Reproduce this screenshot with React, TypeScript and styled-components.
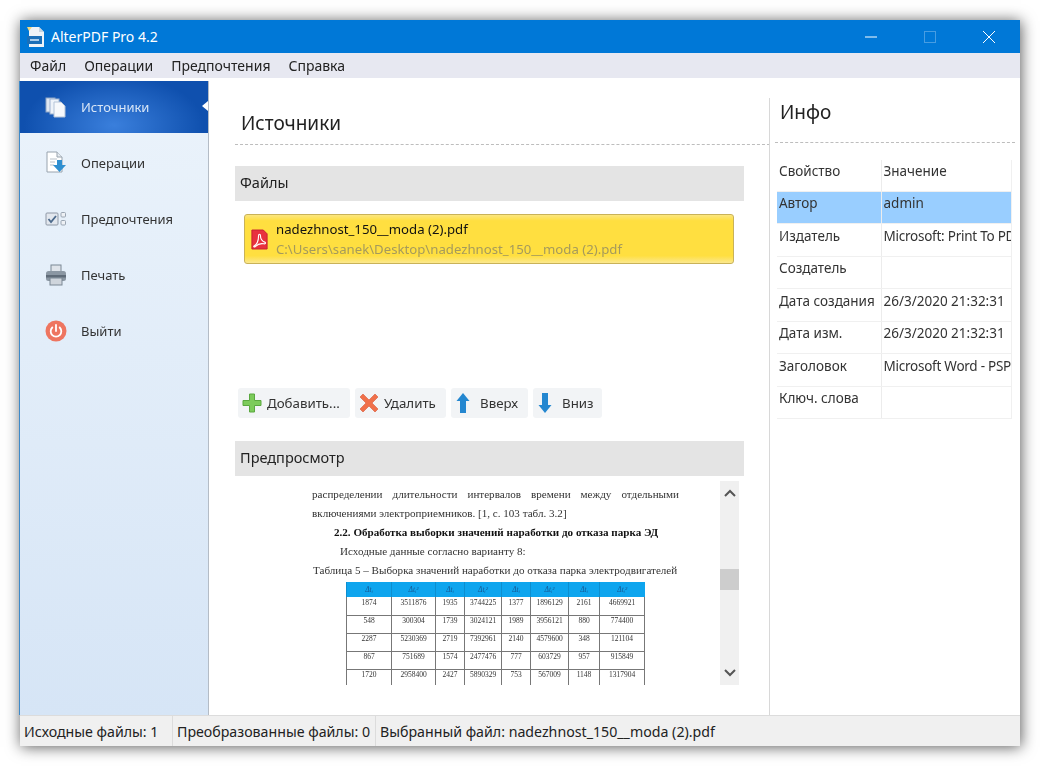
import React from 'react';
import styled, { createGlobalStyle } from 'styled-components';

const GlobalStyle = createGlobalStyle`
  html, body { margin: 0; padding: 0; background: #fff; }
  body { font-family: "Noto Sans", "Open Sans", sans-serif; color: #222; }
`;

const AppIcon = () => (
  <svg width="20" height="22" viewBox="0 0 20 22">
    <path d="M3 1h10l5 5v15H3z" fill="#eef3f8" />
    <path d="M13 1l5 5h-5z" fill="#c5d3e0" />
    <path d="M1 1l5 0-3 4z" fill="#f3d97a" />
    <rect x="1" y="10" width="15" height="8" fill="#1b6fb8" />
    <rect x="4" y="13" width="9" height="2" fill="#a9cdec" />
  </svg>
);

const SourcesIcon = () => (
  <svg width="22" height="22" viewBox="0 0 22 22">
    <rect x="1" y="2" width="9" height="14" fill="#dfe7f2" stroke="#8fa5c4" />
    <rect x="5" y="3" width="9" height="15" fill="#eef3fa" stroke="#9db2cf" />
    <path d="M9 6h7l4 4v11H9z" fill="#f7f9fc" stroke="#b5c4d8" />
  </svg>
);

const OperationsIcon = () => (
  <svg width="22" height="24" viewBox="0 0 22 24">
    <path d="M2 1h10l5 5v15H2z" fill="#fff" stroke="#98a3ae" />
    <path d="M12 1v5h5" fill="#e6ebf0" stroke="#98a3ae" />
    <path d="M5 8h7M5 11h5M5 14h4" stroke="#b8c0c8" />
    <path d="M12 9h5v5h4l-6.500 7-6.500-7h4z" fill="#2f8fd0" />
  </svg>
);

const PrefsIcon = () => (
  <svg width="22" height="16" viewBox="0 0 22 16">
    <rect x="1" y="2" width="12" height="12" rx="1" fill="#e2e7ee" stroke="#8e98a6" />
    <path d="M3.500 8l2.500 3 5-6" fill="none" stroke="#4c6a8c" strokeWidth="1.800" />
    <rect x="16" y="1.500" width="4.500" height="4.500" rx="1" fill="#eef1f5" stroke="#9aa5b2" />
    <rect x="16" y="9.500" width="4.500" height="4.500" rx="1" fill="#eef1f5" stroke="#9aa5b2" />
  </svg>
);

const PrinterIcon = () => (
  <svg width="22" height="22" viewBox="0 0 22 22">
    <rect x="6" y="1" width="10" height="7" fill="#dfe4ea" stroke="#7b8794" />
    <rect x="1" y="7" width="20" height="10" rx="2.500" fill="#8b97a3" />
    <rect x="1" y="11" width="20" height="2.500" fill="#5f6b78" />
    <rect x="5" y="14" width="12" height="7" fill="#cfd5dc" stroke="#7b8794" />
  </svg>
);

const PowerIcon = () => (
  <svg width="22" height="22" viewBox="0 0 22 22">
    <circle cx="11" cy="11" r="10.500" fill="#ee7560" />
    <path d="M7.300 7.500a5.300 5.300 0 1 0 7.400 0" fill="none" stroke="#fff" strokeWidth="1.800" strokeLinecap="round" />
    <path d="M11 5v6" stroke="#fff" strokeWidth="1.800" strokeLinecap="round" />
  </svg>
);

const PdfIcon = () => (
  <svg width="19" height="23" viewBox="0 0 20 24">
    <path d="M2 2h12l4 4v16H2z" fill="#e8313f" stroke="#c8202e" />
    <path d="M4 19c4-2 5-6 5-11 0-2 2-2 2 0 0 3 2 6 5 7 1 .7 0 2-1.500 1.500-3-.6-6 0-9 3-.7.800-2 .2-1.500-.500z" fill="none" stroke="#fff" strokeWidth="1.200" />
  </svg>
);

const PlusIcon = () => (
  <svg width="20" height="20" viewBox="0 0 20 20">
    <path d="M7.500 1h5v6.500H19v5h-6.500V19h-5v-6.500H1v-5h6.500z" fill="#7ccb5a" stroke="#5aa83f" />
  </svg>
);

const CrossIcon = () => (
  <svg width="20" height="20" viewBox="0 0 20 20">
    <path d="M4 1l6 6 6-6 3 3-6 6 6 6-3 3-6-6-6 6-3-3 6-6-6-6z" fill="#f0704a" stroke="#d9593a" strokeWidth=".6" />
  </svg>
);

const UpIcon = () => (
  <svg width="16" height="20" viewBox="0 0 16 20">
    <path d="M8 0l6.500 8H11v12H5V8H1.500z" fill="#2487d0" />
  </svg>
);

const DownIcon = () => (
  <svg width="16" height="20" viewBox="0 0 16 20">
    <path d="M5 0h6v12h3.500L8 20l-6.500-8H5z" fill="#2487d0" />
  </svg>
);

const Chevron = ({ up }: { up?: boolean }) => (
  <svg width="12" height="8" viewBox="0 0 12 8">
    <path d={up ? 'M1 7l5-5 5 5' : 'M1 1l5 5 5-5'} fill="none" stroke="#555" strokeWidth="2" />
  </svg>
);

const nav = [
  { name: 'Источники', icon: <SourcesIcon />, active: true },
  { name: 'Операции', icon: <OperationsIcon /> },
  { name: 'Предпочтения', icon: <PrefsIcon /> },
  { name: 'Печать', icon: <PrinterIcon /> },
  { name: 'Выйти', icon: <PowerIcon /> },
];

const tools = [
  { label: 'Добавить...', icon: <PlusIcon />, width: 112, gap: 5 },
  { label: 'Удалить', icon: <CrossIcon />, width: 91, gap: 5 },
  { label: 'Вверх', icon: <UpIcon />, width: 77, gap: 9 },
  { label: 'Вниз', icon: <DownIcon />, width: 69, gap: 9 },
];

const props = [
  ['Свойство', 'Значение'],
  ['Автор', 'admin'],
  ['Издатель', 'Microsoft: Print To PDF'],
  ['Создатель', ''],
  ['Дата создания', '26/3/2020 21:32:31'],
  ['Дата изм.', '26/3/2020 21:32:31'],
  ['Заголовок', 'Microsoft Word - PSP'],
  ['Ключ. слова', ''],
];

const columns = [45, 44, 29, 37, 29, 38, 31, 45];

const sheet = [
  ['1874', '3511876', '1935', '3744225', '1377', '1896129', '2161', '4669921'],
  ['548', '300304', '1739', '3024121', '1989', '3956121', '880', '774400'],
  ['2287', '5230369', '2719', '7392961', '2140', '4579600', '348', '121104'],
  ['867', '751689', '1574', '2477476', '777', '603729', '957', '915849'],
  ['1720', '2958400', '2427', '5890329', '753', '567009', '1148', '1317904'],
];

export default function App() {
  return (
    <Page>
      <GlobalStyle />
      <Window>
        <TitleBar>
          <AppIcon />
          <TitleText>AlterPDF Pro 4.2</TitleText>
          <WindowButtons>
            <svg width="14" height="14" viewBox="0 0 14 14"><path d="M1 7h12" stroke="#fff" /></svg>
            <svg width="14" height="14" viewBox="0 0 14 14" opacity=".28"><rect x="1.500" y="1.500" width="11" height="11" fill="none" stroke="#fff" /></svg>
            <svg width="14" height="14" viewBox="0 0 14 14"><path d="M1 1l12 12M13 1L1 13" stroke="#fff" /></svg>
          </WindowButtons>
        </TitleBar>
        <MenuBar>
          <MenuItem>Файл</MenuItem>
          <MenuItem>Операции</MenuItem>
          <MenuItem>Предпочтения</MenuItem>
          <MenuItem>Справка</MenuItem>
        </MenuBar>
        <Body>
          <Sidebar>
            {nav.map((item) => (
              <NavItem key={item.name} $active={item.active}>
                <NavIcon>{item.icon}</NavIcon>
                {item.name}
              </NavItem>
            ))}
          </Sidebar>
          <Sources>
            <Heading>Источники</Heading>
            <SectionBar>Файлы</SectionBar>
            <FileList>
              <FileCard>
                <PdfIcon />
                <FileText>
                  <FileName>nadezhnost_150__moda (2).pdf</FileName>
                  <FilePath>C:\Users\sanek\Desktop\nadezhnost_150__moda (2).pdf</FilePath>
                </FileText>
              </FileCard>
            </FileList>
            <Toolbar>
              {tools.map((tool) => (
                <ToolButton key={tool.label} $width={tool.width} $gap={tool.gap}>
                  {tool.icon}
                  {tool.label}
                </ToolButton>
              ))}
            </Toolbar>
            <SectionBar>Предпросмотр</SectionBar>
            <Preview>
              <Sheet>
                <Para>распределении длительности интервалов времени между отдельными включениями электроприемников. [1, с. 103 табл. 3.2]</Para>
                <SubHead>2.2. Обработка выборки значений наработки до отказа парка ЭД</SubHead>
                <Line $indent={28}>Исходные данные согласно варианту 8:</Line>
                <Line $indent={1}>Таблица 5 – Выборка значений наработки до отказа парка электродвигателей</Line>
                <DocTable>
                  <colgroup>
                    {columns.map((w, i) => <col key={i} style={{ width: w }} />)}
                  </colgroup>
                  <thead>
                    <tr>
                      {columns.map((_, i) => <DocHead key={i}>{i % 2 ? 'Δtᵢ²' : 'Δtᵢ'}</DocHead>)}
                    </tr>
                  </thead>
                  <tbody>
                    {sheet.map((row) => (
                      <tr key={row[0]}>
                        {row.map((v, i) => <DocCell key={i}>{v}</DocCell>)}
                      </tr>
                    ))}
                  </tbody>
                </DocTable>
              </Sheet>
              <ScrollBar>
                <ScrollArrow><Chevron up /></ScrollArrow>
                <ScrollTrack><ScrollThumb /></ScrollTrack>
                <ScrollArrow><Chevron /></ScrollArrow>
              </ScrollBar>
            </Preview>
          </Sources>
          <Info>
            <InfoHeading>Инфо</InfoHeading>
            <PropTable>
              <tbody>
                {props.map((row, i) => (
                  <tr key={row[0]}>
                    <PropCell $selected={i === 1} $first>{row[0]}</PropCell>
                    <PropCell $selected={i === 1} $narrow={row[1].startsWith('Microsoft')}>{row[1]}</PropCell>
                  </tr>
                ))}
              </tbody>
            </PropTable>
          </Info>
        </Body>
        <StatusBar>
          <StatusCell $width={153}>Исходные файлы: 1</StatusCell>
          <StatusCell $width={203}>Преобразованные файлы: 0</StatusCell>
          <StatusCell>Выбранный файл: nadezhnost_150__moda (2).pdf</StatusCell>
        </StatusBar>
      </Window>
    </Page>
  );
}

const Page = styled.div`
  width: 1040px;
  height: 766px;
  padding: 20px;
  box-sizing: border-box;
  overflow: hidden;
`;
const Window = styled.div`
  width: 1000px;
  height: 726px;
  display: flex;
  flex-direction: column;
  background: #fff;
  box-shadow: 1px 1px 14px rgba(0, 0, 0, 0.65);
  filter: blur(0.4px);
`;
const TitleBar = styled.div`
  height: 33px;
  flex: none;
  display: flex;
  align-items: center;
  padding-left: 6px;
  background: #0078d7;
  color: #fff;
`;
const TitleText = styled.div`
  margin-left: 5px;
  font-size: 14px;
`;
const WindowButtons = styled.div`
  margin-left: auto;
  padding-right: 24px;
  display: flex;
  gap: 45px;
`;
const MenuBar = styled.div`
  height: 25px;
  flex: none;
  display: flex;
  align-items: center;
  padding-left: 10px;
  gap: 18px;
  background: #e7e8f1;
`;
const MenuItem = styled.div`
  font-size: 14px;
  color: #222;
`;
const Body = styled.div`
  flex: 1;
  min-height: 0;
  display: flex;
`;
const Sidebar = styled.div`
  width: 188px;
  flex: none;
  margin-top: 3px;
  display: flex;
  flex-direction: column;
  gap: 4px;
  border-right: 1px solid #b4bcc6;
  border-left: 1px solid #3f8ac8;
  box-sizing: content-box;
  margin-left: -1px;
  background: linear-gradient(#ebf3fb, #d6e5f6);
`;
const NavItem = styled.div<{ $active?: boolean }>`
  position: relative;
  height: 52px;
  padding-bottom: 1px;
  box-sizing: border-box;
  display: flex;
  align-items: center;
  font-size: 13px;
  color: ${(p) => (p.$active ? '#d8e6f7' : '#333')};
  background: ${(p) =>
    p.$active ? 'radial-gradient(ellipse 90px 50px at 50% 85%, #3a7fdc, #0f50ae)' : 'transparent'};
  ${(p) =>
    p.$active &&
    `&::after {
      content: '';
      position: absolute;
      right: 0;
      top: 20px;
      border: 5px solid transparent;
      border-right: 6px solid #fff;
      border-left: 0;
    }`}
`;
const NavIcon = styled.div`
  width: 61px;
  padding-left: 25px;
  box-sizing: border-box;
  display: flex;
`;
const Sources = styled.div`
  width: 560px;
  flex: none;
  padding: 0 25px 0 26px;
  box-sizing: border-box;
  display: flex;
  flex-direction: column;
`;
const Heading = styled.div`
  height: 67px;
  margin-right: -26px;
  padding: 33px 0 0 6px;
  box-sizing: border-box;
  font-size: 19px;
  line-height: 25px;
  color: #222;
  border-bottom: 1px dashed #bdbdbd;
  margin-bottom: 21px;
`;
const SectionBar = styled.div`
  height: 35px;
  flex: none;
  display: flex;
  align-items: center;
  padding: 0 0 3px 5px;
  box-sizing: border-box;
  background: #e4e4e4;
  font-size: 14.500px;
`;
const FileList = styled.div`
  height: 187px;
  flex: none;
  padding: 13px 10px 0 9px;
  box-sizing: border-box;
`;
const FileCard = styled.div`
  height: 50px;
  display: flex;
  align-items: center;
  gap: 7px;
  padding-left: 5px;
  box-sizing: border-box;
  border: 1px solid #c9b258;
  border-radius: 3px;
  background: linear-gradient(#fbe680 0, #ffdf40 12%, #ffdf40 85%, #fbe88f 100%);
`;
const FileText = styled.div`
  display: flex;
  flex-direction: column;
  line-height: 20px;
  font-size: 13.200px;
`;
const FileName = styled.div`
  color: #111;
`;
const FilePath = styled.div`
  color: #a59a5c;
`;
const Toolbar = styled.div`
  height: 53px;
  flex: none;
  display: flex;
  gap: 5px;
  padding-left: 3px;
`;
const ToolButton = styled.div<{ $width: number; $gap: number }>`
  width: ${(p) => p.$width}px;
  height: 30px;
  padding: 0 0 1px 4px;
  box-sizing: border-box;
  display: flex;
  align-items: center;
  gap: ${(p) => p.$gap}px;
  background: #f2f4f6;
  border-radius: 3px;
  font-size: 13.300px;
  color: #333;
  white-space: nowrap;
`;
const Preview = styled.div`
  height: 206px;
  margin-top: 3px;
  display: flex;
  overflow: hidden;
`;
const Sheet = styled.div`
  width: 485px;
  padding: 6px 0 0 77px;
  box-sizing: border-box;
  font-family: "Liberation Serif", serif;
  font-size: 11.100px;
  line-height: 19px;
  color: #333;
  filter: blur(0.4px);
`;
const Para = styled.div`
  width: 367px;
  text-align: justify;
`;
const SubHead = styled.div`
  padding-left: 22px;
  font-weight: bold;
  color: #111;
  white-space: nowrap;
`;
const Line = styled.div<{ $indent: number }>`
  padding-left: ${(p) => p.$indent}px;
  white-space: nowrap;
`;
const DocTable = styled.table`
  margin: 2px 0 0 34px;
  width: 298px;
  table-layout: fixed;
  border-collapse: collapse;
  font-size: 7.500px;
  line-height: 10px;
  text-align: center;
`;
const DocHead = styled.th`
  height: 15px;
  padding: 0;
  background: #0ea5ee;
  color: #145a96;
  font-weight: normal;
  font-style: italic;
  border-left: 1px solid #0c8ed0;
`;
const DocCell = styled.td`
  height: 18px;
  padding: 0 0 6px;
  box-sizing: border-box;
  border: 1px solid #777;
  border-top: 0;
`;
const ScrollBar = styled.div`
  width: 19px;
  margin-top: 2px;
  display: flex;
  flex-direction: column;
  background: #f0f0f0;
`;
const ScrollArrow = styled.div`
  height: 24px;
  flex: none;
  display: flex;
  align-items: center;
  justify-content: center;
`;
const ScrollTrack = styled.div`
  flex: 1;
  padding-top: 64px;
`;
const ScrollThumb = styled.div`
  height: 21px;
  background: #cdcdcd;
`;
const Info = styled.div`
  flex: 1;
  min-width: 0;
  border-left: 1px solid #d8d8d8;
  margin-top: 20px;
  padding: 0 5px;
`;
const InfoHeading = styled.div`
  height: 45px;
  box-sizing: border-box;
  padding: 2px 0 0 5px;
  font-size: 19px;
  line-height: 25px;
  border-bottom: 1px dashed #bdbdbd;
  margin-bottom: 17px;
`;
const PropTable = styled.table`
  width: 235px;
  margin-left: 2px;
  table-layout: fixed;
  border-collapse: collapse;
  tr:first-child td {
    height: 31px;
  }
`;
const PropCell = styled.td<{ $selected?: boolean; $first?: boolean; $narrow?: boolean }>`
  width: ${(p) => (p.$first ? '104px' : 'auto')};
  height: 32.500px;
  padding: 0 0 8px 2px;
  box-sizing: border-box;
  font-size: 13.500px;
  color: #333;
  letter-spacing: ${(p) => (p.$narrow ? '-0.25px' : '0')};
  white-space: nowrap;
  overflow: hidden;
  background: ${(p) => (p.$selected ? '#99ceff' : '#fff')};
  border-bottom: 1px solid #f0f0f0;
  border-right: 1px solid ${(p) => (p.$first ? '#ececec' : '#f0f0f0')};
`;
const StatusBar = styled.div`
  height: 31px;
  flex: none;
  display: flex;
  background: #f0f0f0;
  border-top: 1px solid #dcdcdc;
  box-sizing: border-box;
`;
const StatusCell = styled.div<{ $width?: number }>`
  ${(p) => p.$width && `width: ${p.$width}px; flex: none; border-right: 1px solid #dcdcdc;`}
  padding-left: 4px;
  box-sizing: border-box;
  display: flex;
  align-items: center;
  font-size: 14.200px;
  color: #222;
  white-space: nowrap;
`;
